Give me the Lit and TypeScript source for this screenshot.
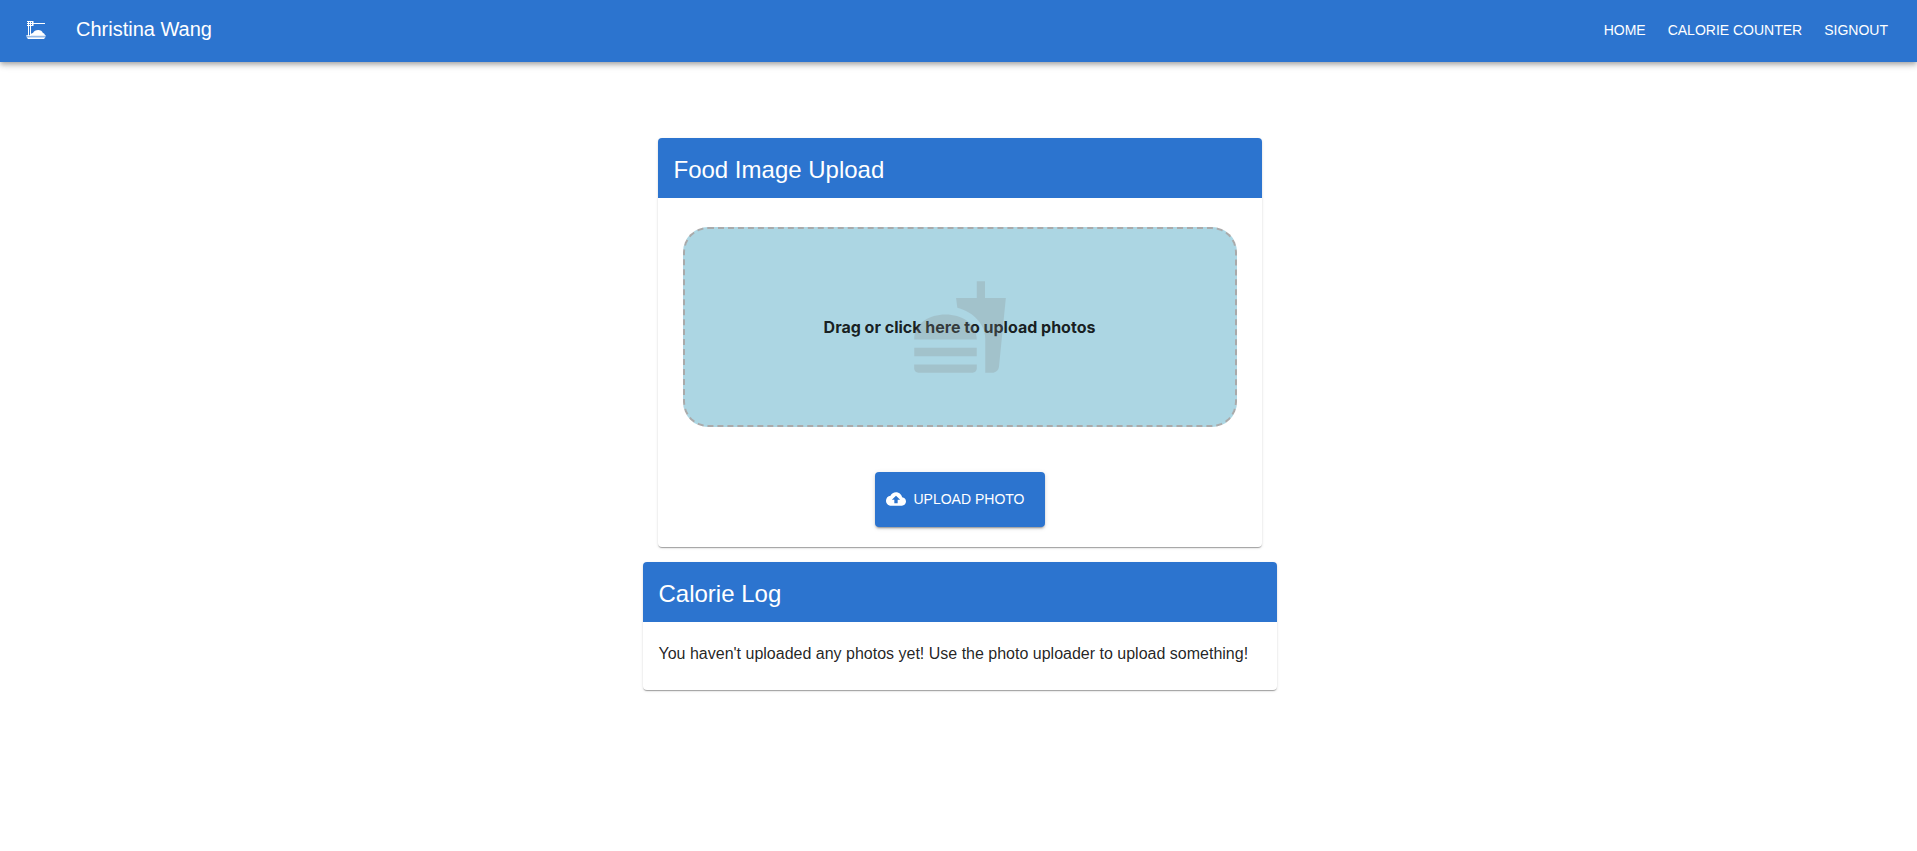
import { LitElement, html, css, svg } from "lit";
import { customElement, property } from "lit/decorators.js";

const dinnerIcon = svg`
  <path d="M2.300 18.300h19.400v1.200H2.300zM2.500 20.300h19l-1.500 1.700H4z"></path>
  <path d="M3 4h6v1H3zM3 6h18v1H3zM3 8h6v1H3z"></path>
  <path d="M4 4h1v15H4zM6 4h1v15H6zM8 4h1.500v5H8z"></path>
  <path d="M7 18.500V17c.5-.6 1.200-1 2-1 .7-1.800 2.800-3 5.200-3 2.300 0 4.100 1.200 4.700 3 1.200.3 1.900 1.200 2.100 2.500z"></path>
`;

const fastfoodIcon = svg`
  <path d="M18.060 22.990h1.660c.84 0 1.530-.64 1.630-1.460L23 5.050h-5V1h-1.970v4.050h-4.970l.3 2.340c1.710.47 3.310 1.320 4.270 2.260 1.440 1.420 2.430 2.890 2.430 5.290v8.050zM1 21.990V21h15.030v.99c0 .55-.45 1-1.010 1H2.010c-.56 0-1.010-.45-1.010-1zM16.030 14.990c0-8-15.030-8-15.030 0h15.030zM1.020 17h15v2h-15z"></path>
`;

const cloudIcon = svg`
  <path d="M19.350 10.040C18.670 6.590 15.640 4 12 4 9.110 4 6.600 5.640 5.350 8.040 2.340 8.360 0 10.910 0 14c0 3.310 2.690 6 6 6h13c2.760 0 5-2.240 5-5 0-2.640-2.050-4.780-4.650-4.960zM14 13v4h-4v-4H7l5-5 5 5h-3z"></path>
`;

@customElement("nav-bar")
class NavBar extends LitElement {
  @property() user = "";

  static styles = css`
    :host {
      display: block;
      position: relative;
      background: #2c74cf;
      color: #fff;
      box-shadow: 0 2px 4px -1px rgba(0, 0, 0, 0.2),
        0 4px 5px rgba(0, 0, 0, 0.14), 0 1px 10px rgba(0, 0, 0, 0.12);
    }
    .bar {
      display: flex;
      align-items: center;
      gap: 28px;
      min-height: 58px;
      padding: 0 29px 4px 24px;
    }
    .home {
      display: flex;
      color: inherit;
    }
    .icon {
      width: 24px;
      height: 24px;
      fill: currentColor;
    }
    .user {
      flex: 1;
      margin: 0;
      font-size: 20px;
      font-weight: 400;
      line-height: 32px;
    }
    .links {
      display: flex;
      gap: 22px;
      padding-top: 2px;
    }
    .link {
      color: inherit;
      font-size: 14px;
      line-height: 24px;
      text-decoration: none;
      text-transform: uppercase;
    }
  `;

  render() {
    return html`
      <header class="bar">
        <a class="home" href="#" aria-label="Home">
          <svg class="icon" viewBox="0 0 24 24" aria-hidden="true">${dinnerIcon}</svg>
        </a>
        <h1 class="user">${this.user}</h1>
        <nav class="links">
          <a class="link" href="#home">Home</a>
          <a class="link" href="#counter">Calorie Counter</a>
          <a class="link" href="#signout">Signout</a>
        </nav>
      </header>
    `;
  }
}

@customElement("title-card")
class TitleCard extends LitElement {
  @property() heading = "";

  static styles = css`
    :host {
      display: block;
      overflow: hidden;
      border-radius: 4px;
      background: #fff;
      box-shadow: 0 2px 1px -1px rgba(0, 0, 0, 0.2),
        0 1px 1px rgba(0, 0, 0, 0.14), 0 1px 3px rgba(0, 0, 0, 0.12);
    }
    .heading {
      margin: 0;
      padding: 16px 16px 12px;
      background: #2c74cf;
      color: #fff;
      font-size: 24px;
      font-weight: 400;
      line-height: 32px;
    }
  `;

  render() {
    return html`
      <h2 class="heading">${this.heading}</h2>
      <slot></slot>
    `;
  }
}

@customElement("app-root")
class AppRoot extends LitElement {
  static styles = css`
    :host {
      display: block;
      font-family: "Liberation Sans", Helvetica, Arial, sans-serif;
      color: rgba(0, 0, 0, 0.87);
    }
    .page {
      display: flex;
      flex-direction: column;
      align-items: center;
      gap: 15px;
      padding: 76px 16px 16px 18px;
    }
    .upload,
    .log {
      box-sizing: border-box;
      width: 100%;
    }
    .upload {
      max-width: 604px;
    }
    .log {
      max-width: 634px;
    }
    .uploader {
      display: flex;
      flex-direction: column;
      align-items: center;
      gap: 45px;
      padding: 29px 25px 20px;
    }
    .drop {
      display: grid;
      place-items: center;
      box-sizing: border-box;
      width: 100%;
      height: 200px;
      border: 2px dashed #aaa;
      border-radius: 25px;
      background: #acd6e3;
      cursor: pointer;
    }
    .file {
      position: absolute;
      width: 1px;
      height: 1px;
      opacity: 0;
    }
    .food,
    .hint {
      grid-area: 1 / 1;
    }
    .food {
      width: 100px;
      height: 100px;
      fill: #888;
      opacity: 0.25;
    }
    .hint {
      font-family: Inter, sans-serif;
      font-size: 16px;
      font-weight: 700;
      line-height: 24px;
    }
    .send {
      display: flex;
      align-items: center;
      gap: 8px;
      min-width: 170px;
      height: 55px;
      padding: 0 16px 2px 11px;
      border: 0;
      border-radius: 4px;
      background: #2c74cf;
      color: #fff;
      font: inherit;
      font-size: 14px;
      line-height: 24px;
      text-transform: uppercase;
      cursor: pointer;
      box-shadow: 0 3px 1px -2px rgba(0, 0, 0, 0.2),
        0 2px 2px rgba(0, 0, 0, 0.14), 0 1px 5px rgba(0, 0, 0, 0.12);
    }
    .cloud {
      width: 20px;
      height: 20px;
      fill: currentColor;
    }
    .empty {
      margin: 0;
      padding: 20px 16px 24px;
      font-size: 16px;
      line-height: 24px;
    }
  `;

  render() {
    return html`
      <nav-bar user="Christina Wang"></nav-bar>
      <main class="page">
        <title-card class="upload" heading="Food Image Upload">
          <div class="uploader">
            <label class="drop" for="photo">
              <input class="file" id="photo" type="file" accept="image/*" multiple />
              <span class="hint">Drag or click here to upload photos</span>
              <svg class="food" viewBox="0 0 24 24" aria-hidden="true">${fastfoodIcon}</svg>
            </label>
            <button class="send" type="button">
              <svg class="cloud" viewBox="0 0 24 24" aria-hidden="true">${cloudIcon}</svg>
              Upload Photo
            </button>
          </div>
        </title-card>
        <title-card class="log" heading="Calorie Log">
          <p class="empty">
            You haven't uploaded any photos yet! Use the photo uploader to upload something!
          </p>
        </title-card>
      </main>
    `;
  }
}
